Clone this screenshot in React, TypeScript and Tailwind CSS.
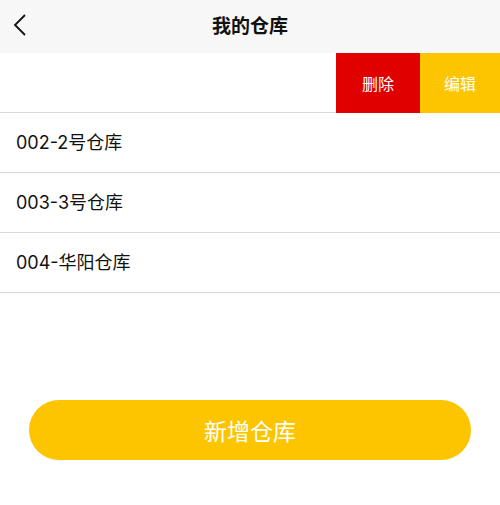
import React from "react";

const font = { fontFamily: '"PingFang SC", "Noto Sans CJK SC", "Noto Sans", sans-serif' };
const rowFont = { fontFamily: 'Inter, "Noto Sans CJK SC", sans-serif' };

export default function App() {
  const rows = ["002-2号仓库", "003-3号仓库", "004-华阳仓库"];
  return (
    <div className="w-[500px] h-[505px] bg-white flex flex-col" style={font}>
      <div className="h-[53px] bg-[#f7f7f7] flex items-center justify-center relative shrink-0">
        <svg className="absolute left-[12px] top-[13px]" width="16" height="24" viewBox="0 0 16 24">
          <path d="M13 2 L3 12 L13 22" fill="none" stroke="#111" strokeWidth="1.8" />
        </svg>
        <span className="text-[19px] font-bold text-[#111] -mt-[2px]">我的仓库</span>
      </div>
      <div className="h-[60px] flex border-b border-[#d8d8d8] shrink-0">
        <div className="flex-1" />
        <div className="w-[84px] bg-[#e00000] flex items-center justify-center text-white text-[16px] -mb-px">删除</div>
        <div className="w-[80px] bg-[#fcc500] flex items-center justify-center text-white text-[16px] -mb-px">编辑</div>
      </div>
      {rows.map((r) => (
        <div key={r} className="h-[60px] flex items-center pl-[16px] border-b border-[#d8d8d8] text-[18px] text-[#111] shrink-0" style={rowFont}>
          {r}
        </div>
      ))}
      <div className="px-[29px] pt-[107px]">
        <div className="h-[60px] rounded-full bg-[#fcc500] flex items-center justify-center text-white text-[23px]">
          新增仓库
        </div>
      </div>
    </div>
  );
}
